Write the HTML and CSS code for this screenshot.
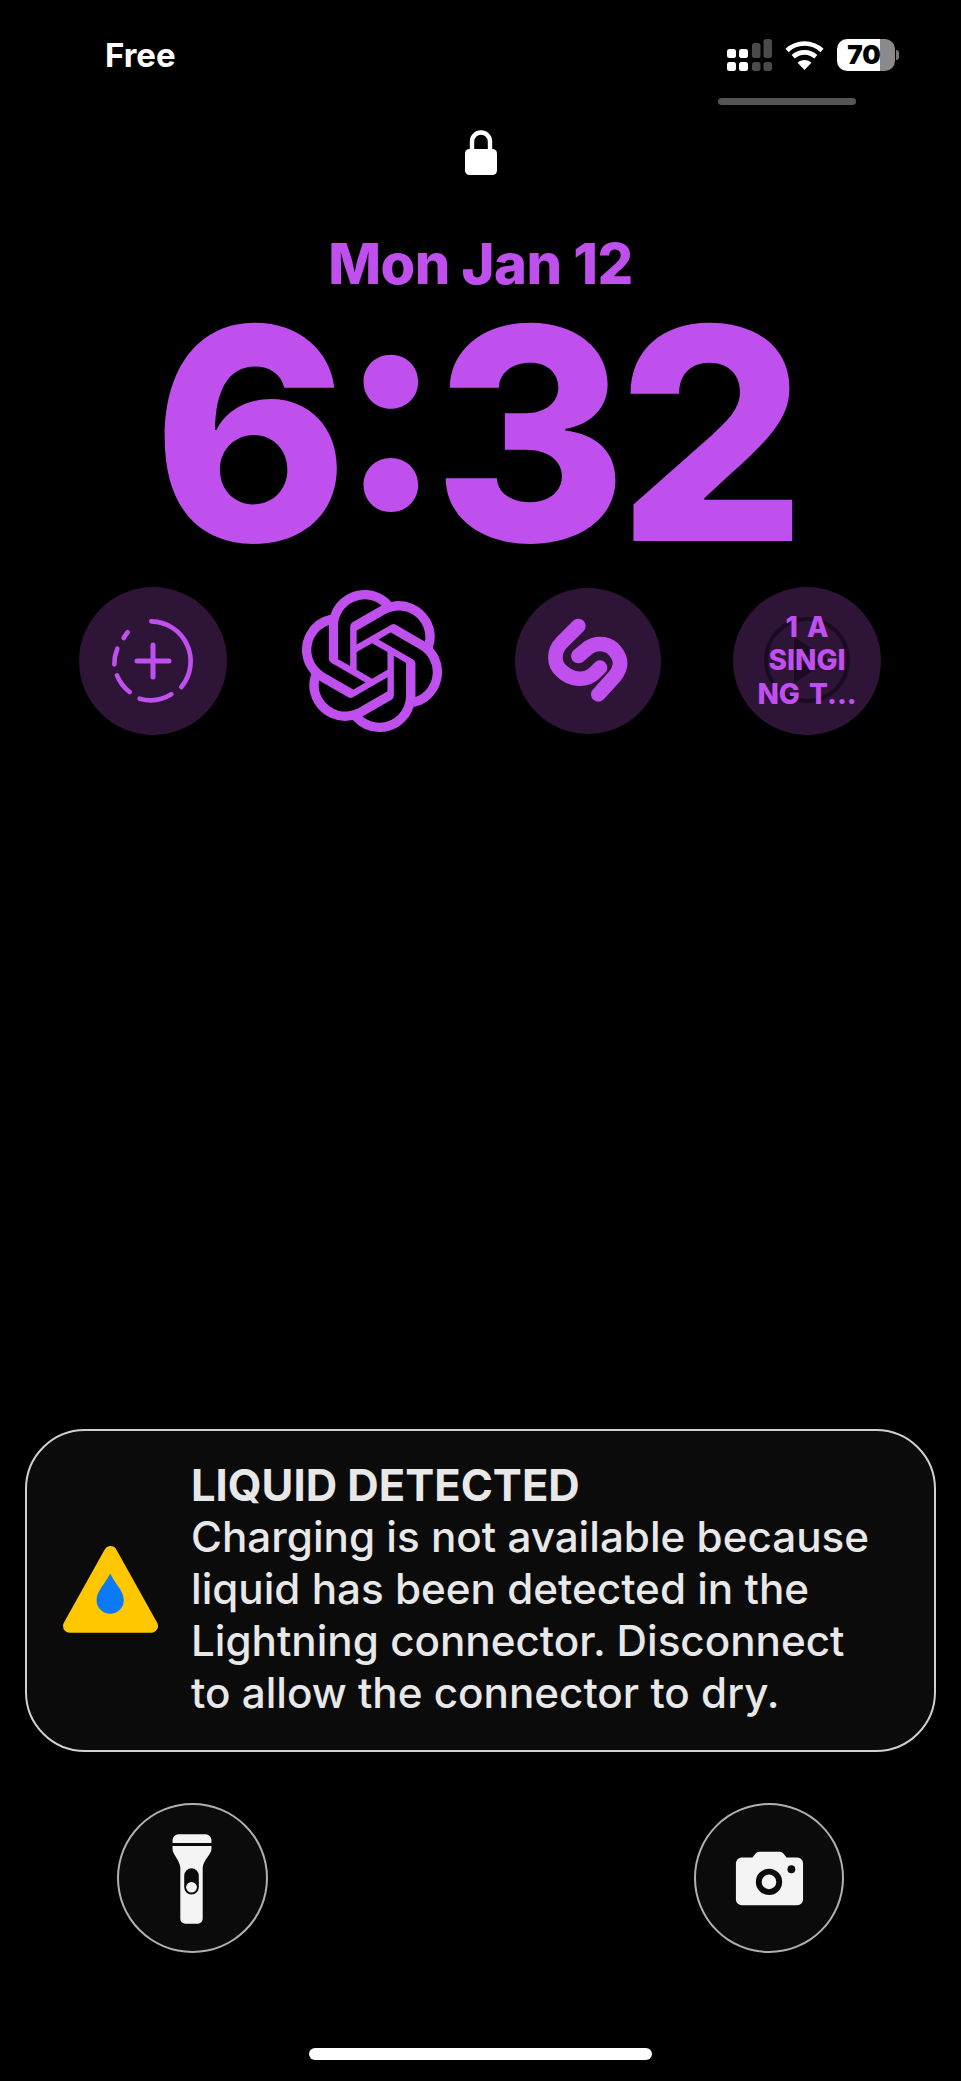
FILE: index.html
```html
<!DOCTYPE html>
<html lang="en">
<head>
<meta charset="utf-8">
<title>Lock Screen</title>
<link rel="stylesheet" href="styles.css">
</head>
<body>
<main class="screen">
  <header class="status">
    <span class="carrier">Free</span>
    <div class="status-icons">
      <svg class="signal" viewBox="0 0 45 32" aria-hidden="true">
        <g fill="#fff">
          <rect x="0" y="10" width="9" height="9" rx="2.5"/><rect x="12" y="10" width="9" height="9" rx="2.5"/>
          <rect x="0" y="23" width="9" height="9" rx="2.5"/><rect x="12" y="23" width="9" height="9" rx="2.5"/>
        </g>
        <g fill="#4a4a4a">
          <rect x="25" y="4" width="8.5" height="15" rx="2.5"/><rect x="36.5" y="0" width="8.5" height="19" rx="2.5"/>
          <rect x="25" y="23" width="8.5" height="9" rx="2.5"/><rect x="36.5" y="23" width="8.5" height="9" rx="2.5"/>
        </g>
      </svg>
      <svg class="wifi" viewBox="0 0 39 30" aria-hidden="true">
        <g fill="none" stroke="#fff" stroke-width="4.6">
          <path d="M2 10.5C12 1.2 27 1.2 37 10.5"/>
          <path d="M8.2 16.8C14.6 10.9 24.4 10.9 30.8 16.8"/>
        </g>
        <path d="M19.5 30 12.6 22.7C16.4 19.2 22.6 19.2 26.4 22.7Z" fill="#fff"/>
      </svg>
      <div class="battery">
        <div class="battery-body"><span class="battery-level">70</span></div>
        <span class="battery-nub"></span>
      </div>
    </div>
  </header>
  <div class="pill"></div>
  <svg class="lock" viewBox="0 0 32 45" aria-hidden="true">
    <path d="M7 21V11.5a9 9 0 0 1 18 0V21" fill="none" stroke="#fff" stroke-width="4.4"/>
    <rect x="0" y="19" width="32" height="26" rx="4.5" fill="#fff"/>
  </svg>
  <div class="date">Mon Jan 12</div>
  <div class="time">6:32</div>
  <section class="widgets">
    <div class="widget">
      <svg class="fill-icon" viewBox="58 50 444 444" aria-hidden="true">
        <g fill="none" stroke="#c050ee" stroke-width="14" stroke-linecap="round">
          <path d="M275 153A120 120 0 0 1 365 350"/>
          <path d="M335 372A120 120 0 0 1 240 385"/>
          <path d="M210 365A120 120 0 0 1 172 315"/>
          <path d="M164 282A120 120 0 0 1 173 235"/>
          <path d="M192 203A120 120 0 0 1 204 186"/>
          <path d="M232 272H328M280 224V320" stroke-width="15"/>
        </g>
      </svg>
    </div>
    <svg class="knot" viewBox="0 0 24 24" aria-hidden="true">
      <path fill="#c050ee" d="M22.282 9.821a5.985 5.985 0 0 0-.516-4.91 6.046 6.046 0 0 0-6.51-2.9A6.065 6.065 0 0 0 4.981 4.18a5.985 5.985 0 0 0-3.998 2.9 6.046 6.046 0 0 0 .743 7.097 5.98 5.98 0 0 0 .51 4.911 6.051 6.051 0 0 0 6.515 2.9A5.985 5.985 0 0 0 13.26 24a6.056 6.056 0 0 0 5.772-4.206 5.99 5.99 0 0 0 3.997-2.9 6.056 6.056 0 0 0-.747-7.073zM13.26 22.43a4.476 4.476 0 0 1-2.876-1.04l.141-.081 4.779-2.758a.795.795 0 0 0 .392-.681v-6.737l2.02 1.168a.071.071 0 0 1 .038.052v5.583a4.504 4.504 0 0 1-4.494 4.494zM3.6 18.304a4.47 4.47 0 0 1-.535-3.014l.142.085 4.783 2.759a.771.771 0 0 0 .78 0l5.843-3.369v2.332a.08.08 0 0 1-.033.062L9.74 19.95a4.5 4.5 0 0 1-6.14-1.646zM2.34 7.896a4.485 4.485 0 0 1 2.366-1.973V11.6a.766.766 0 0 0 .388.676l5.815 3.355-2.02 1.168a.076.076 0 0 1-.071 0l-4.83-2.786A4.504 4.504 0 0 1 2.34 7.872zm16.597 3.855l-5.833-3.387L15.119 7.2a.076.076 0 0 1 .071 0l4.83 2.791a4.494 4.494 0 0 1-.676 8.105v-5.678a.79.79 0 0 0-.407-.667zm2.01-3.023l-.141-.085-4.774-2.782a.776.776 0 0 0-.785 0L9.409 9.23V6.897a.066.066 0 0 1 .028-.061l4.83-2.787a4.5 4.5 0 0 1 6.68 4.66zm-12.64 4.135l-2.02-1.164a.08.08 0 0 1-.038-.057V6.075a4.5 4.5 0 0 1 7.375-3.453l-.142.08L8.704 5.46a.795.795 0 0 0-.393.681zm1.097-2.365l2.602-1.5 2.607 1.5v2.999l-2.597 1.5-2.607-1.5Z"/>
    </svg>
    <div class="widget widget-small">
      <svg class="shazam" viewBox="-6 0 330 330" aria-hidden="true">
        <g fill="none" stroke="#c050ee" stroke-width="44" stroke-linecap="round">
          <path d="M130 60 80 110C55 135 55 175 80 195 110 225 155 225 180 200L195 185"/>
          <path d="M130 150 160 125C190 105 225 115 240 135 265 165 255 190 240 210L190 265"/>
        </g>
      </svg>
    </div>
    <div class="widget widget-track">
      <svg class="fill-icon play" viewBox="0 0 148 148" aria-hidden="true">
        <circle cx="74" cy="73" r="41" fill="none" stroke="#1b0b22" stroke-width="4"/>
        <path d="M61 50 97 73 61 96Z" fill="#1b0b22"/>
      </svg>
      <div class="track-text">1 A<br>SINGI<br>NG T...</div>
    </div>
  </section>
  <section class="notice">
    <svg class="notice-icon" viewBox="128 373 286 263" aria-hidden="true">
      <path d="M271 395 394 616H148Z" fill="#fec700" stroke="#fec700" stroke-width="40" stroke-linejoin="round"/>
      <path d="M270 458C285 490 311 510 311 538A41 41 0 0 1 229 538C229 510 255 490 270 458Z" fill="#0a7bf5"/>
    </svg>
    <div class="notice-text">
      <div class="notice-title">LIQUID DETECTED</div>
      <div class="notice-body">Charging is not available because liquid has been detected in the Lightning connector. Disconnect to allow the connector to dry.</div>
    </div>
  </section>
  <section class="actions">
    <button class="action" type="button" aria-label="Flashlight">
      <svg class="action-icon" viewBox="0 0 150 150" aria-hidden="true">
        <path d="M61 30H89A6 6 0 0 1 95 36V39H55V36A6 6 0 0 1 61 30Z" fill="#f4f4f4"/>
        <path fill-rule="evenodd" fill="#f4f4f4" d="M55 42H95V45C95 51 87 56 86 64V117A5 5 0 0 1 81 122H68A5 5 0 0 1 63 117V64C62 56 55 51 55 45ZM74.500 65A7.500 7.500 0 0 0 67 72.500V84.500A7.500 7.500 0 0 0 82 84.500V72.500A7.500 7.500 0 0 0 74.500 65Z"/>
        <circle cx="74.500" cy="84.500" r="5.500" fill="#f4f4f4"/>
      </svg>
    </button>
    <button class="action" type="button" aria-label="Camera">
      <svg class="action-icon" viewBox="0 0 150 150" aria-hidden="true">
        <path fill="#f4f4f4" d="M47 54H58L61 50A5 5 0 0 1 65 48H86A5 5 0 0 1 90 50L93 54H104A6 6 0 0 1 110 60V97A6 6 0 0 1 104 103H47A6 6 0 0 1 41 97V60A6 6 0 0 1 47 54Z"/>
        <circle cx="75" cy="79" r="10.500" fill="none" stroke="#0b0b0b" stroke-width="6"/>
        <circle cx="98" cy="66" r="4" fill="#0b0b0b"/>
      </svg>
    </button>
  </section>
  <div class="home-indicator"></div>
</main>
</body>
</html>
```
FILE: styles.css
```css
* { box-sizing: border-box; }
html, body { margin: 0; padding: 0; background: #000; }
.screen {
  width: 961px;
  height: 2081px;
  overflow: hidden;
  display: flex;
  flex-direction: column;
  background: #000;
  font-family: Inter, "Liberation Sans", sans-serif;
}
.status {
  display: flex;
  justify-content: space-between;
  align-items: center;
  height: 40px;
  margin-top: 35px;
  padding: 0 62px 0 105px;
}
.carrier { font-size: 33px; font-weight: 700; line-height: 40px; color: #fff; }
.status-icons { display: flex; align-items: center; gap: 13px; }
.signal { width: 45px; height: 32px; display: block; }
.wifi { width: 39px; height: 30px; display: block; }
.battery { display: flex; align-items: center; gap: 1px; }
.battery-body {
  width: 58px;
  height: 32px;
  border-radius: 10px;
  background: linear-gradient(to right, #fff 0, #fff 43px, #8a8a8a 43px);
  text-align: center;
}
.battery-level {
  display: block;
  padding-right: 4px;
  font-size: 26px;
  font-weight: 900;
  line-height: 32px;
  color: #000;
}
.battery-nub { width: 3px; height: 10px; border-radius: 0 3px 3px 0; background: #777; }
.pill {
  align-self: flex-end;
  width: 138px;
  height: 7px;
  margin: 23px 105px 0 0;
  border-radius: 4px;
  background: #555;
}
.lock { display: block; align-self: center; width: 32px; height: 45px; margin-top: 25px; }
.date {
  margin-top: 59px;
  text-align: center;
  font-size: 56px;
  font-weight: 800;
  line-height: 60px;
  letter-spacing: -0.5px;
  color: #c050ee;
}
.time {
  margin-top: 19px;
  padding-right: 12px;
  text-align: center;
  font-size: 296px;
  font-weight: 850;
  line-height: 240px;
  letter-spacing: -10px;
  font-feature-settings: "case";
  color: #c050ee;
}
.widgets {
  display: flex;
  align-items: center;
  gap: 72px;
  height: 148px;
  margin-top: 34px;
  padding-left: 79px;
}
.widget {
  position: relative;
  flex: none;
  display: flex;
  align-items: center;
  justify-content: center;
  width: 148px;
  height: 148px;
  border-radius: 50%;
  background: #2e1436;
}
.widget-small { width: 146px; height: 146px; }
.fill-icon { display: block; width: 148px; height: 148px; }
.knot { display: block; flex: none; width: 142px; height: 142px; margin-left: 2px; }
.shazam { display: block; width: 110px; height: 110px; }
.play { position: absolute; inset: 0; }
.track-text {
  position: relative;
  text-align: center;
  font-size: 28px;
  font-weight: 800;
  line-height: 33.500px;
  word-spacing: 3px;
  color: #c050ee;
}
.notice {
  display: flex;
  align-items: center;
  gap: 33px;
  height: 323px;
  margin: 694px 25px 0;
  padding: 0 36px 4px;
  border: 2px solid #d0d0d0;
  border-radius: 60px;
  background: #0b0b0b;
}
.notice-icon { display: block; flex: none; width: 95px; height: 88px; }
.notice-text { width: 690px; color: #e8e8e8; font-size: 42.200px; line-height: 52px; }
.notice-title { font-size: 43.500px; font-weight: 700; }
.notice-body { font-weight: 500; }
.actions {
  display: flex;
  justify-content: space-between;
  margin-top: 51px;
  padding: 0 117px;
}
.action {
  width: 150.500px;
  height: 150px;
  padding: 0;
  border: 2px solid #b0b0b0;
  border-radius: 50%;
  background: #0b0b0b;
}
.action-icon { display: block; width: 146px; height: 146px; }
.home-indicator {
  align-self: center;
  width: 343px;
  height: 12px;
  margin-top: 95px;
  border-radius: 6px;
  background: #fff;
}
```
